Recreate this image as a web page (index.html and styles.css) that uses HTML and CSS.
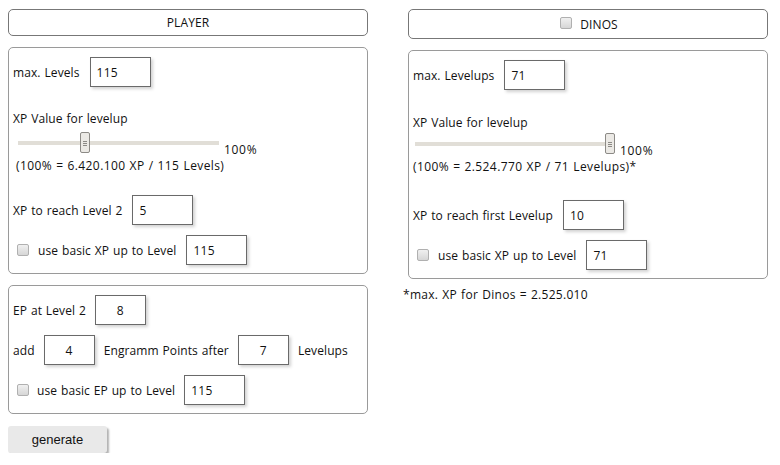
FILE: index.html
```html
<!DOCTYPE html>
<html lang="en">
<head>
  <meta charset="UTF-8">
  <title>XP Generator</title>
  <link rel="stylesheet" href="styles.css">
</head>
<body>
  <div class="page">
    <div class="column">
      <div class="header">PLAYER</div>

      <div class="box">
        <div class="row">
          <label>max. Levels</label>
          <input type="text" class="field" value="115">
        </div>
        <div class="caption">XP Value for levelup</div>
        <div class="slider-row">
          <input type="range" class="slider" min="0" max="307" value="100">
          <span class="percent">100%</span>
        </div>
        <div class="note">(100% = 6.420.100 XP / 115 Levels)</div>
        <div class="row row-gap">
          <label>XP to reach Level 2</label>
          <input type="text" class="field" value="5">
        </div>
        <div class="row row-check">
          <input type="checkbox" class="check">
          <label>use basic XP up to Level</label>
          <input type="text" class="field" value="115">
        </div>
      </div>

      <div class="box box-ep">
        <div class="row">
          <label>EP at Level 2</label>
          <input type="text" class="field small" value="8">
        </div>
        <div class="row row-small">
          <label>add</label>
          <input type="text" class="field small" value="4">
          <label>Engramm Points after</label>
          <input type="text" class="field small" value="7">
          <label>Levelups</label>
        </div>
        <div class="row row-check">
          <input type="checkbox" class="check">
          <label>use basic EP up to Level</label>
          <input type="text" class="field" value="115">
        </div>
      </div>

      <button class="generate">generate</button>
    </div>

    <div class="column">
      <div class="header header-dinos">
        <input type="checkbox" class="check">
        <span>DINOS</span>
      </div>

      <div class="box box-dinos">
        <div class="row">
          <label>max. Levelups</label>
          <input type="text" class="field" value="71">
        </div>
        <div class="caption">XP Value for levelup</div>
        <div class="slider-row">
          <input type="range" class="slider slider-dinos" min="0" max="100" value="100">
          <span class="percent">100%</span>
        </div>
        <div class="note">(100% = 2.524.770 XP / 71 Levelups)*</div>
        <div class="row row-gap">
          <label>XP to reach first Levelup</label>
          <input type="text" class="field" value="10">
        </div>
        <div class="row row-check">
          <input type="checkbox" class="check">
          <label>use basic XP up to Level</label>
          <input type="text" class="field" value="71">
        </div>
      </div>

      <div class="footnote">*max. XP for Dinos = 2.525.010</div>
    </div>
  </div>
</body>
</html>
```

FILE: styles.css
```css
body {
  margin: 8px;
  font-family: "Open Sans", sans-serif;
  font-size: 12px;
  letter-spacing: 0.1px;
  word-spacing: 0.6px;
  color: #111;
  background-color: #fff;
}
.page {
  display: grid;
  grid-template-columns: 360px 360px;
  column-gap: 40px;
  align-items: start;
  margin-top: 1px;
}
.header {
  height: 27px;
  box-sizing: border-box;
  border: 1px solid #777;
  border-radius: 5px;
  display: flex;
  align-items: center;
  justify-content: center;
  padding-bottom: 1px;
}
.header-dinos {
  height: 30px;
  gap: 8px;
  padding-left: 2px;
  padding-top: 1px;
}
.box {
  margin-top: 11px;
  border: 1px solid #9a9a9a;
  border-radius: 5px;
  padding: 9px 4px 8px 4px;
}
.row {
  display: flex;
  align-items: center;
  gap: 10px;
}
.box-ep .row {
  gap: 9px;
}
.row-gap {
  margin-top: 21px;
}
.box-dinos .row-gap {
  margin-top: 25px;
}
.row-check {
  margin-top: 10px;
  padding-left: 4px;
}
.row-check .check {
  margin-right: -1px;
}
.row-small {
  margin-top: 10px;
}
.field {
  width: 61px;
  height: 30px;
  box-sizing: border-box;
  border: 1px solid #6a6a6a;
  border-radius: 0;
  box-shadow: 2px 2px 3px rgba(0, 0, 0, 0.18);
  font-family: "Open Sans", sans-serif;
  font-size: 12px;
  letter-spacing: 0.3px;
  color: #111;
  padding: 0 0 0 6px;
  outline: none;
}
.field.small {
  width: 51px;
  padding: 0;
  text-align: center;
}
.caption {
  margin-top: 23px;
  line-height: 17px;
}
.box-dinos .caption {
  margin-top: 24px;
}
.slider-row {
  display: flex;
  align-items: flex-end;
  margin-top: 5px;
  height: 21px;
}
.box-dinos .slider-row {
  margin-top: 2px;
}
.slider {
  -webkit-appearance: none;
  appearance: none;
  width: 201px;
  height: 21px;
  margin: 0 0 0 5px;
  background: transparent;
}
.slider-dinos {
  width: 200px;
  margin-left: 2px;
}
.slider::-webkit-slider-runnable-track {
  height: 4px;
  background: #e1ded7;
}
.slider::-webkit-slider-thumb {
  -webkit-appearance: none;
  width: 10px;
  height: 21px;
  margin-top: -9px;
  box-sizing: border-box;
  border: 1px solid #8c8a86;
  border-radius: 2px;
  background:
    linear-gradient(#8c8a86, #8c8a86) center 8px / 4px 1px no-repeat,
    linear-gradient(#8c8a86, #8c8a86) center 10px / 4px 1px no-repeat,
    linear-gradient(#8c8a86, #8c8a86) center 12px / 4px 1px no-repeat,
    #ebe9e5;
}
.percent {
  margin-left: 5px;
  line-height: 15px;
  margin-bottom: -4px;
  letter-spacing: 0.7px;
}
.note {
  margin-top: 5px;
  padding-left: 3px;
  line-height: 16px;
  letter-spacing: 0.4px;
}
.box-dinos .note {
  padding-left: 0;
}
.check {
  -webkit-appearance: none;
  appearance: none;
  width: 12px;
  height: 12px;
  margin: 0;
  border: 1px solid #b0b0b0;
  border-radius: 2px;
  background: linear-gradient(#f0f0f0, #d6d6d6);
}
.header .check {
  margin-top: -2px;
}
.generate {
  margin-top: 12px;
  width: 99px;
  height: 27px;
  border: none;
  border-radius: 3px;
  background-color: #e9e9e9;
  box-shadow: 2px 2px 2px rgba(0, 0, 0, 0.3);
  font-family: "Liberation Sans", Arial, sans-serif;
  font-size: 13px;
  letter-spacing: 0;
  color: #111;
  cursor: pointer;
}
.footnote {
  margin-top: 8px;
  margin-left: -5px;
  line-height: 16px;
  letter-spacing: 0.3px;
}
```
